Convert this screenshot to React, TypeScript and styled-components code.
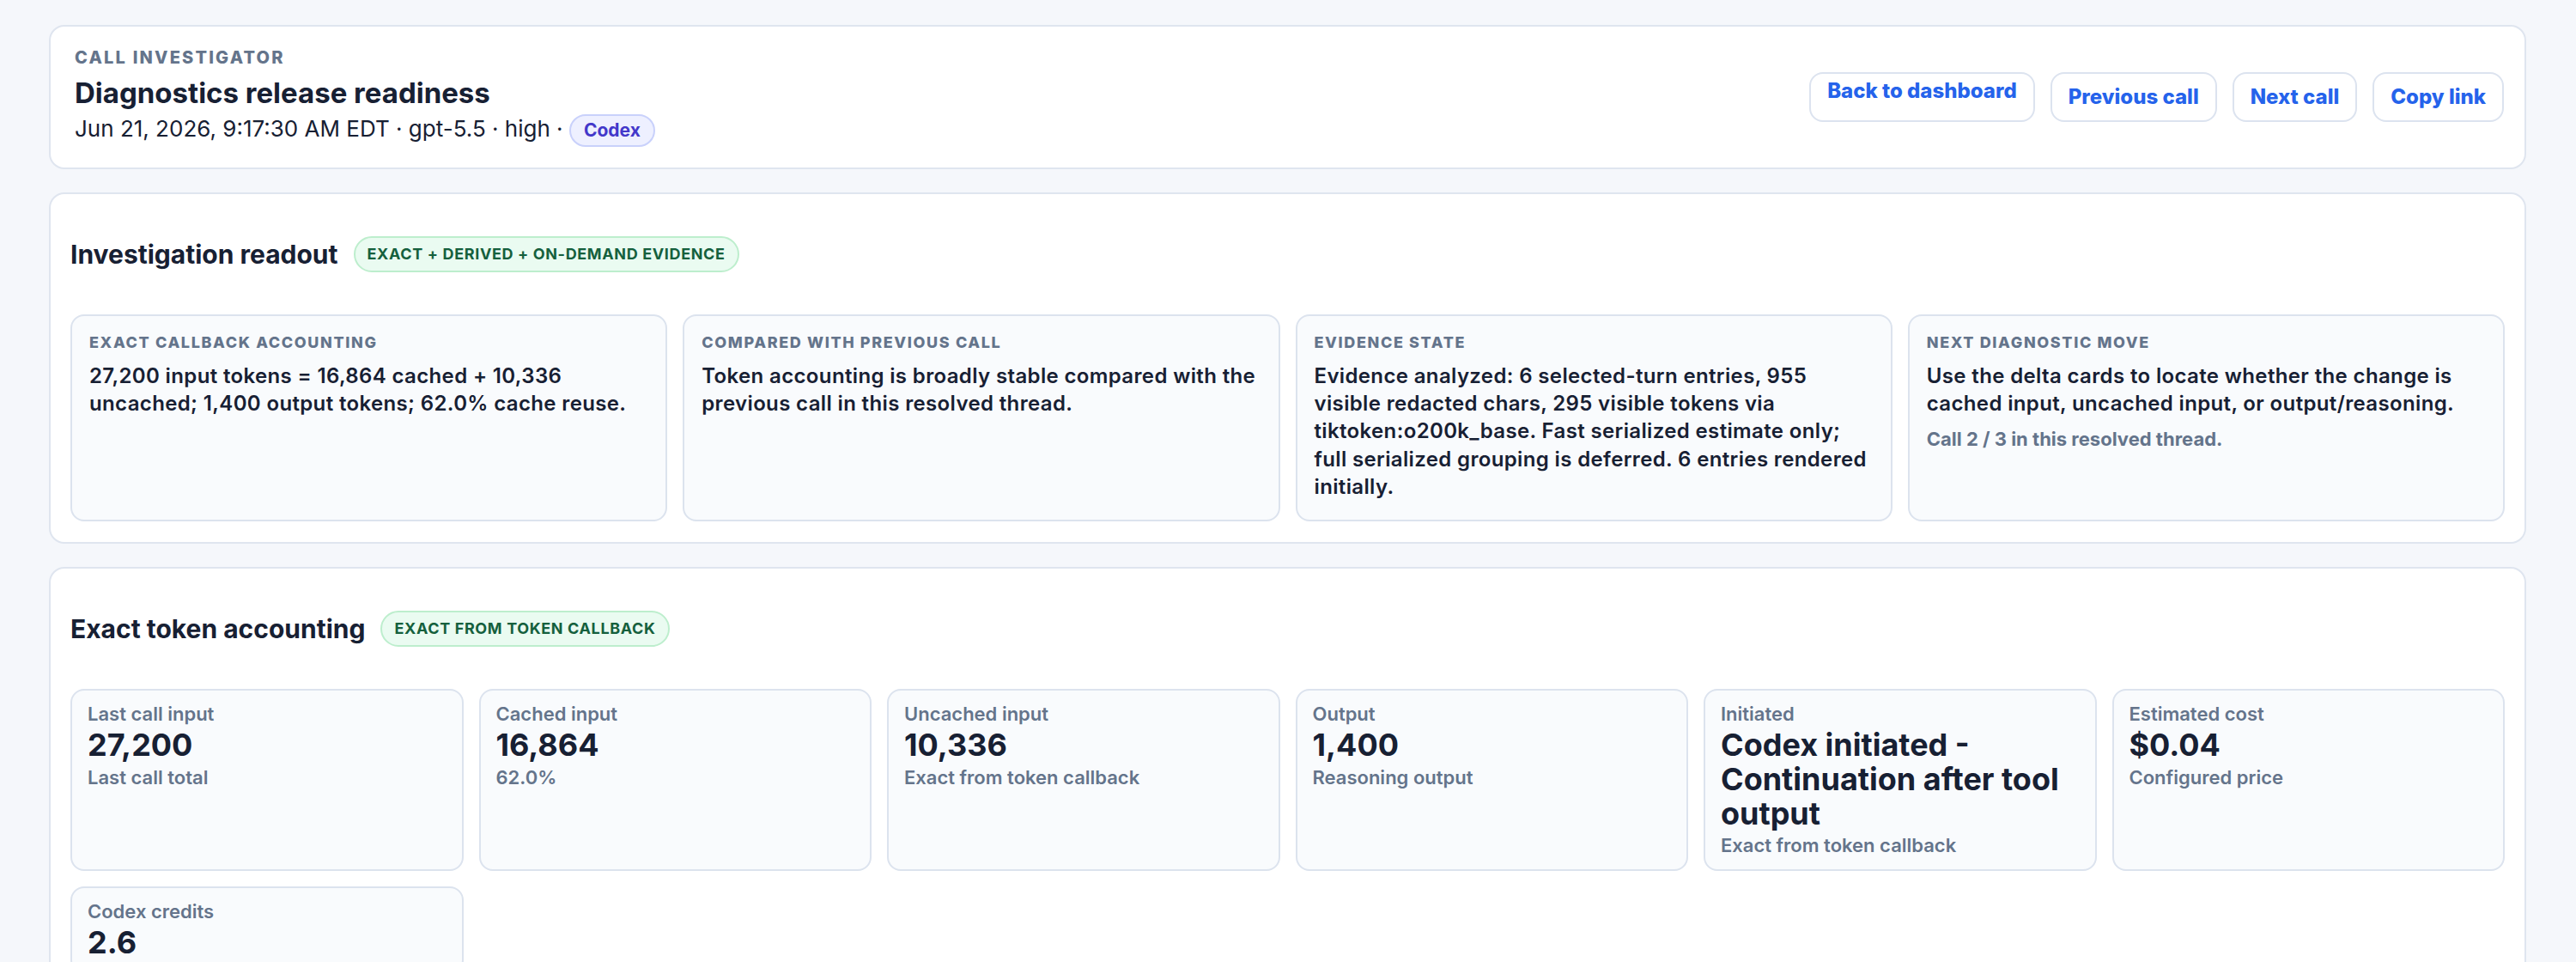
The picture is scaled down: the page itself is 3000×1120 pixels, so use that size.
import React from 'react';
import styled, { createGlobalStyle } from 'styled-components';

// call investigator page: header, readout, token accounting

const GlobalStyle = createGlobalStyle`
body {
    margin: 0;
    background: #f5f7fb;
    font-family: Inter, "Liberation Sans", sans-serif;
    color: #172033;
}
`

const Page = styled.main`
display: flex;
flex-direction: column;
gap: 27px;
padding: 29px 58px 0 57px;
`

const Card = styled.section`
background: #ffffff;
border: 2px solid #dfe5ef;
border-radius: 18px;
`

const HeaderCard = styled(Card)`
display: flex;
align-items: center;
justify-content: space-between;
padding: 24px 24px 24px 28px;
`

const Eyebrow = styled.div`
font-size: 20px;
line-height: 24px;
font-weight: 800;
letter-spacing: 0.11em;
text-transform: uppercase;
color: #64748b;
margin-bottom: 11px;
`

const Title = styled.h1`
margin: 0 0 7px;
font-size: 33px;
line-height: 36px;
font-weight: 700;
color: #172033;
`

const Meta = styled.div`
font-size: 26px;
line-height: 33.6px;
color: #172033;
`

const Pill = styled.span`
display: inline-block;
font-size: 21px;
line-height: 24px;
font-weight: 700;
padding: 5px 15px;
border: 2px solid #c9d1fb;
background: #eef0ff;
color: #4338ca;
border-radius: 999px;
`

const Actions = styled.nav`
display: flex;
align-items: center;
gap: 18px;
`

const ActionButton = styled.button<{ $top?: boolean }>`
box-sizing: border-box;
height: 58px;
display: flex;
align-items: ${props => props.$top ? 'flex-start' : 'center'};
padding: ${props => props.$top ? '6px 19px 0' : '0 19px'};
border: 2px solid #dce3ef;
border-radius: 16px;
background: #ffffff;
color: #2563eb;
font-family: inherit;
font-size: 24px;
line-height: 28.8px;
font-weight: 800;
text-decoration: none;
cursor: pointer;
`

const Section = styled(Card)`
padding: 24px 23px;
`

const SectionHead = styled.div`
display: flex;
align-items: center;
gap: 18px;
min-height: 92px;
margin-bottom: 24px;
`

const SectionTitle = styled.h2`
margin: 0;
font-size: 30px;
line-height: 36px;
font-weight: 700;
color: #172033;
`

const Badge = styled.span`
font-size: 18px;
line-height: 22px;
font-weight: 700;
letter-spacing: 0.035em;
padding: 8px 14px;
border: 2px solid #bdeecd;
background: #eafbf1;
color: #15603d;
border-radius: 999px;
`

const Grid = styled.div<{ $cols: number }>`
display: grid;
grid-template-columns: repeat(${props => props.$cols}, 1fr);
gap: 18px;
`

const ReadoutCard = styled.div`
box-sizing: border-box;
min-height: 241px;
display: flex;
flex-direction: column;
gap: 12px;
padding: 20px;
background: #f9fbfd;
border: 2px solid #dce3ee;
border-radius: 16px;
`

const ReadoutLabel = styled.div`
font-size: 18px;
line-height: 21.6px;
font-weight: 800;
letter-spacing: 0.09em;
text-transform: uppercase;
color: #64748b;
`

const ReadoutBody = styled.p`
margin: 0;
font-size: 24px;
line-height: 32.4px;
font-weight: 600;
letter-spacing: 0.015em;
color: #172033;
`

const ReadoutNote = styled.div`
font-size: 22px;
line-height: 26.4px;
font-weight: 700;
color: #64748b;
`

const TokenCard = styled.div`
display: flex;
flex-direction: column;
gap: 4px;
padding: 14px 18px;
background: #f9fbfd;
border: 2px solid #dce3ee;
border-radius: 16px;
`

const TokenLabel = styled.div`
font-size: 22px;
line-height: 26.4px;
font-weight: 600;
color: #64748b;
`

const TokenValue = styled.div`
font-size: 36px;
line-height: 39.6px;
font-weight: 700;
color: #172033;
`

const readout = [
    {
        label: 'Exact callback accounting',
        body: '27,200 input tokens = 16,864 cached + 10,336 uncached; 1,400 output tokens; 62.0% cache reuse.',
    },
    {
        label: 'Compared with previous call',
        body: 'Token accounting is broadly stable compared with the previous call in this resolved thread.',
    },
    {
        label: 'Evidence state',
        body: 'Evidence analyzed: 6 selected-turn entries, 955 visible redacted chars, 295 visible tokens via tiktoken:o200k_base. Fast serialized estimate only; full serialized grouping is deferred. 6 entries rendered initially.',
    },
    {
        label: 'Next diagnostic move',
        body: 'Use the delta cards to locate whether the change is cached input, uncached input, or output/reasoning.',
        note: 'Call 2 / 3 in this resolved thread.',
    },
];

const tokens: { label: string; value: string; sub?: string }[] = [
    { label: 'Last call input', value: '27,200', sub: 'Last call total' },
    { label: 'Cached input', value: '16,864', sub: '62.0%' },
    { label: 'Uncached input', value: '10,336', sub: 'Exact from token callback' },
    { label: 'Output', value: '1,400', sub: 'Reasoning output' },
    { label: 'Initiated', value: 'Codex initiated - Continuation after tool output', sub: 'Exact from token callback' },
    { label: 'Estimated cost', value: '$0.04', sub: 'Configured price' },
    { label: 'Codex credits', value: '2.6' },
];

export default function App(): JSX.Element {
    return (
        <>
            <GlobalStyle />
            <Page>
                <HeaderCard>
                    <div>
                        <Eyebrow>Call investigator</Eyebrow>
                        <Title>Diagnostics release readiness</Title>
                        <Meta>Jun 21, 2026, 9:17:30 AM EDT · gpt-5.5 · high · <Pill>Codex</Pill></Meta>
                    </div>
                    <Actions>
                        <ActionButton as="a" href="#" $top>Back to dashboard</ActionButton>
                        <ActionButton>Previous call</ActionButton>
                        <ActionButton>Next call</ActionButton>
                        <ActionButton>Copy link</ActionButton>
                    </Actions>
                </HeaderCard>

                <Section>
                    <SectionHead>
                        <SectionTitle>Investigation readout</SectionTitle>
                        <Badge>EXACT + DERIVED + ON-DEMAND EVIDENCE</Badge>
                    </SectionHead>
                    <Grid $cols={4}>
                        {readout.map((item, index) =>
                            <ReadoutCard key={index}>
                                <ReadoutLabel>{item.label}</ReadoutLabel>
                                <ReadoutBody>{item.body}</ReadoutBody>
                                {item.note && <ReadoutNote>{item.note}</ReadoutNote>}
                            </ReadoutCard>
                        )}
                    </Grid>
                </Section>

                <Section>
                    <SectionHead>
                        <SectionTitle>Exact token accounting</SectionTitle>
                        <Badge>EXACT FROM TOKEN CALLBACK</Badge>
                    </SectionHead>
                    <Grid $cols={6}>
                        {tokens.map((item, index) =>
                            <TokenCard key={index}>
                                <TokenLabel>{item.label}</TokenLabel>
                                <TokenValue>{item.value}</TokenValue>
                                {item.sub && <TokenLabel>{item.sub}</TokenLabel>}
                            </TokenCard>
                        )}
                    </Grid>
                </Section>
            </Page>
        </>
    );
}
